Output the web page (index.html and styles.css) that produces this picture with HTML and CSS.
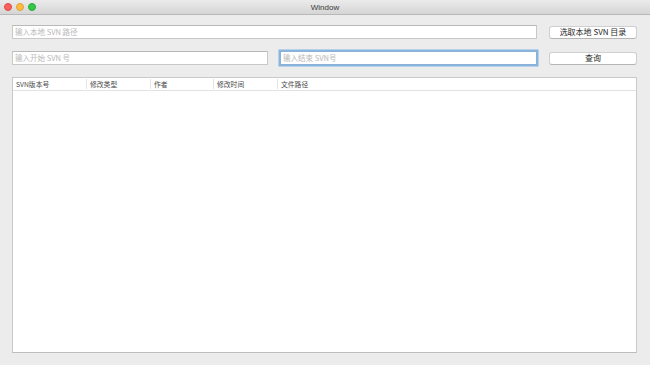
FILE: index.html
```
<!DOCTYPE html>
<html>
<head>
<meta charset="utf-8">
<link rel="stylesheet" href="styles.css">
</head>
<body>
<div class="window">
  <div class="titlebar">
    <div class="lights">
      <span class="light red"></span>
      <span class="light yellow"></span>
      <span class="light green"></span>
    </div>
    <div class="title">Window</div>
  </div>
  <div class="content">
    <div class="row row1">
      <div class="field wide"><span class="ph">输入本地 SVN 路径</span></div>
      <div class="btn">选取本地 SVN 目录</div>
    </div>
    <div class="row row2">
      <div class="field half"><span class="ph">输入开始 SVN 号</span></div>
      <div class="field half focus"><span class="ph">输入结束 SVN号</span></div>
      <div class="btn">查询</div>
    </div>
    <div class="table">
      <div class="thead">
        <div class="th c1">SVN版本号</div>
        <div class="th c2">修改类型</div>
        <div class="th c3">作者</div>
        <div class="th c4">修改时间</div>
        <div class="th c5">文件路径</div>
      </div>
      <div class="tbody"></div>
    </div>
  </div>
</div>
</body>
</html>
```
FILE: styles.css
```
html, body {
  margin: 0;
  padding: 0;
}
body {
  width: 650px;
  height: 365px;
  overflow: hidden;
  background: #ececec;
  font-family: "Noto Sans CJK SC", "Noto Sans", sans-serif;
}
.window {
  width: 650px;
  height: 365px;
  display: flex;
  flex-direction: column;
  background: #ececec;
}
.titlebar {
  height: 14px;
  flex: none;
  position: relative;
  background: linear-gradient(#ebebeb, #d5d5d5);
  border-bottom: 1px solid #b8b8b8;
  display: flex;
  align-items: center;
  justify-content: center;
}
.lights {
  position: absolute;
  left: 4px;
  top: 3px;
  display: flex;
  gap: 4px;
}
.light {
  width: 8px;
  height: 8px;
  border-radius: 50%;
  box-sizing: border-box;
}
.red { background: #fc605c; border: 0.5px solid #de4a46; }
.yellow { background: #fdbc40; border: 0.5px solid #dea236; }
.green { background: #34c84a; border: 0.5px solid #27aa35; }
.title {
  font-family: "Liberation Sans", "Noto Sans", sans-serif;
  font-size: 8px;
  color: #3a3a3a;
}
.content {
  flex: 1;
  display: flex;
  flex-direction: column;
  padding: 10px 13px 12px 12px;
}
.row {
  display: flex;
  align-items: center;
  gap: 12px;
}
.row1 { height: 14px; }
.row2 { height: 14px; margin-top: 12px; }
.field {
  box-sizing: border-box;
  height: 14px;
  background: #fff;
  border: 1px solid #c8c8c8;
  border-top-color: #b9b9b9;
  display: flex;
  align-items: center;
  padding-left: 2px;
}
.wide { width: 525px; }
.half { width: 256px; }
.half.focus { width: 257px; }
.focus {
  border-color: #8db2d9;
  box-shadow: 0 0 0 1.5px #86b5e0;
}
.ph {
  font-size: 7.5px;
  color: #b9b9b9;
  line-height: 1;
}
.btn {
  box-sizing: border-box;
  width: 88px;
  height: 13px;
  background: #fff;
  border: 1px solid #cfcfcf;
  border-bottom-color: #b5b5b5;
  border-radius: 3px;
  font-size: 8px;
  color: #2a2a2a;
  display: flex;
  align-items: center;
  justify-content: center;
  line-height: 1;
}
.table {
  margin-top: 12px;
  flex: 1;
  box-sizing: border-box;
  background: #fff;
  border: 1px solid #c9c9c9;
  border-bottom-color: #bdbdbd;
  display: flex;
  flex-direction: column;
}
.thead {
  height: 12px;
  display: flex;
  border-bottom: 1px solid #e2e2e2;
}
.th {
  font-size: 6.8px;
  color: #4a4a4a;
  line-height: 12px;
  padding-left: 3px;
  box-sizing: border-box;
  border-right: 1px solid #e4e4e4;
  height: 10px;
  margin-top: 1px;
  display: flex;
  align-items: center;
}
.c1 { width: 74px; }
.c2 { width: 64px; }
.c3 { width: 63px; }
.c4 { width: 64px; }
.c5 { flex: 1; border-right: none; }
.tbody { flex: 1; }
```
